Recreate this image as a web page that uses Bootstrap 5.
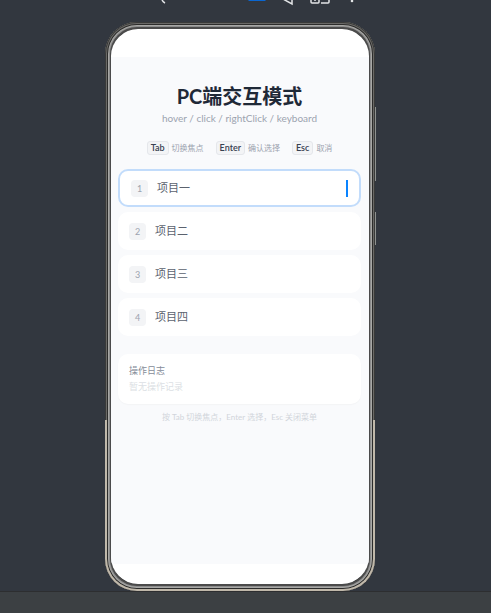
<!DOCTYPE html>
<html lang="zh-CN">
<head>
<meta charset="utf-8">
<meta name="viewport" content="width=device-width, initial-scale=1">
<title>PC端交互模式</title>
<link href="https://cdn.jsdelivr.net/npm/bootstrap@5.3.0/dist/css/bootstrap.min.css" rel="stylesheet">
<style>
body { background: #32373f; font-family: Lato, "Noto Sans CJK SC", sans-serif; }
.toolstrip { height: 22px; padding-left: 27px; }
.toolstrip button { height: 6px; line-height: 0; }
.toolstrip svg { display: block; }
.gap-wide { margin-right: 82px; }
.blue-tab { width: 18px; margin-right: 16px; }
.stage { padding-right: 11px; }
.device { width: 270px; border-radius: 32px; padding: 7px 6px; background: #191a1b;
  box-shadow: inset 0 0 0 1px #393a39, inset 0 0 0 2px #6a6967, inset 0 0 0 3px #2c2c2b, inset 0 0 0 4px #a8a8a6, inset 0 0 0 5px #8c8c8c, inset 0 0 0 7px #4b4b4b; }
.device::after { content: ""; position: absolute; inset: 70% 0 0 0; border: 2px solid #c0b8aa; border-top: 0; border-radius: 0 0 32px 32px; pointer-events: none; }
.side-key { position: absolute; left: 100%; width: 1px; background: #8e918f; }
.key-volume { top: 85px; height: 74px; }
.key-power { top: 190px; height: 33px; }
.display { background: #fff; border-radius: 27px; padding: 28px 0 20px; }
.page { background: #f9fafc; padding: 25px 8px 0 7px; }
.page h1 { font-size: 20px; line-height: 28px; color: #1f2937; }
.subtitle { font-size: 10px; line-height: 16px; color: #9ca3af; }
.keys { margin-top: 15px; gap: 12px; font-size: 8px; line-height: 14px; color: #9ca3af; }
.keys span { gap: 3px; }
.keys kbd { font: 600 9px/12px Lato, sans-serif; color: #374151; background: #f3f4f6; border: 1px solid #e5e7eb; border-radius: 3px; padding: 0 3px; }
.choices { margin-top: 14px; gap: 5px; }
.choice { height: 38px; padding: 0 11px; border: 0; border-radius: 10px; background: #fff; color: #5b626e; font-size: 11px; line-height: 16px; }
.choice.active { border: 2px solid #c2dcfb; }
.choice-number { width: 17px; height: 17px; border-radius: 4px; background: #f3f4f6; color: #9ca3af; font-size: 9px; line-height: 17px; margin-right: 9px; }
.cursor-bar { width: 2px; height: 17px; background: #0a84ff; }
.log { margin-top: 18px; min-height: 49px; border-radius: 10px; background: #fff; padding: 9px 11px; box-shadow: 0 1px 1px #f3f4f6; }
.log h2 { font-size: 9px; line-height: 16px; font-weight: 400; color: #858c98; }
.log p { font-size: 9px; line-height: 16px; color: #dcdfe4; }
.hint { font-size: 8px; line-height: 12px; margin-top: 7px; color: #d1d5db; }
.dock { height: 22px; background: #3c4043; border-top: 1px solid #2d2e30; }
</style>
</head>
<body class="min-vh-100 d-flex flex-column overflow-hidden">
<header class="toolstrip d-flex justify-content-center align-items-start">
  <button class="btn p-0 border-0 gap-wide" aria-label="旋转"><svg width="6" height="6" fill="none" stroke="#e3e5e7" stroke-width="1.5"><path d="M2 0Q3 2 5 3"/></svg></button>
  <button class="btn p-0 border-0 blue-tab" aria-label="当前设备"><svg width="18" height="6"><path d="M0 0h18L17 1H1z" fill="#0a66d0"/></svg></button>
  <button class="btn p-0 border-0 me-3" aria-label="返回"><svg width="12" height="6" fill="none" stroke="#e3e5e7" stroke-width="1.5"><path d="M1-1L10 4V-1"/></svg></button>
  <button class="btn p-0 border-0 me-3" aria-label="多设备"><svg width="20" height="6" fill="none" stroke="#e3e5e7" stroke-width="1.5"><path d="M1-1V2Q1 3 2 3H8Q9 3 9 2V-1M4 0h2M11 3h7q1 0 1-1V-1"/></svg></button>
  <button class="btn p-0 border-0" aria-label="更多"><svg width="12" height="6"><circle cx="6" cy="1" r="1.3" fill="#e3e5e7"/></svg></button>
</header>

<div class="stage flex-grow-1 d-flex">
<main class="device position-relative mx-auto d-flex flex-column">
  <span class="side-key key-volume"></span>
  <span class="side-key key-power"></span>
  <div class="display flex-grow-1 d-flex flex-column overflow-hidden">
    <div class="page flex-grow-1 d-flex flex-column">
      <h1 class="fw-bold text-center mb-0">PC端交互模式</h1>
      <p class="subtitle text-center mb-0">hover / click / rightClick / keyboard</p>
      <div class="keys d-flex justify-content-center">
        <span class="d-flex"><kbd>Tab</kbd>切换焦点</span>
        <span class="d-flex"><kbd>Enter</kbd>确认选择</span>
        <span class="d-flex"><kbd>Esc</kbd>取消</span>
      </div>
      <div class="choices d-flex flex-column">
        <button class="choice active d-flex align-items-center"><span class="choice-number text-center">1</span>项目一<span class="cursor-bar ms-auto"></span></button>
        <button class="choice d-flex align-items-center"><span class="choice-number text-center">2</span>项目二</button>
        <button class="choice d-flex align-items-center"><span class="choice-number text-center">3</span>项目三</button>
        <button class="choice d-flex align-items-center"><span class="choice-number text-center">4</span>项目四</button>
      </div>
      <section class="log">
        <h2 class="mb-0">操作日志</h2>
        <p class="mb-0">暂无操作记录</p>
      </section>
      <p class="hint text-center mb-0">按 Tab 切换焦点，Enter 选择，Esc 关闭菜单</p>
    </div>
  </div>
</main>
</div>
<footer class="dock"></footer>
</body>
</html>
